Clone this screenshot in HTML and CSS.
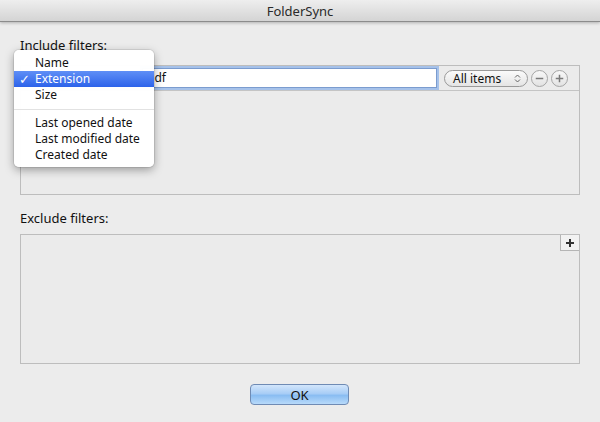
FILE: index.html
```html
<!DOCTYPE html>
<html lang="en">
<head>
    <meta charset="UTF-8">
    <title>FolderSync</title>
    <link rel="stylesheet" href="styles.css">
</head>
<body>
    <div class="window">
        <div class="titlebar">FolderSync</div>
        <div class="content">
            <div class="label">Include filters:</div>
            <div class="filter-box include">
                <div class="filter-row">
                    <div class="field">pdf</div>
                    <div class="popup">
                        <span>All items</span>
                        <svg class="arrows" width="7" height="9" viewBox="0 0 7 9">
                            <path d="M1 3.5 L3.5 1 L6 3.5 M1 5.5 L3.5 8 L6 5.5" fill="none" stroke="#666" stroke-width="1"/>
                        </svg>
                    </div>
                    <div class="round-btn">
                        <svg width="16" height="16" viewBox="0 0 16 16">
                            <path d="M4 8 H12" stroke="#7a7a7a" stroke-width="1.6"/>
                        </svg>
                    </div>
                    <div class="round-btn">
                        <svg width="16" height="16" viewBox="0 0 16 16">
                            <path d="M4 8 H12 M8 4 V12" stroke="#7a7a7a" stroke-width="1.6"/>
                        </svg>
                    </div>
                </div>
            </div>

            <div class="label exclude-label">Exclude filters:</div>
            <div class="filter-box exclude">
                <div class="add-btn">
                    <svg width="10" height="10" viewBox="0 0 10 10">
                        <path d="M1 5 H9 M5 1 V9" stroke="#333" stroke-width="2"/>
                    </svg>
                </div>
            </div>

            <div class="buttons">
                <button class="ok">OK</button>
            </div>
        </div>

        <ul class="menu">
            <li>Name</li>
            <li class="selected"><span class="check">✓</span>Extension</li>
            <li>Size</li>
            <li class="separator"></li>
            <li>Last opened date</li>
            <li>Last modified date</li>
            <li>Created date</li>
        </ul>
    </div>
</body>
</html>
```

FILE: styles.css
```css
body {
    margin: 0;
    padding: 0;
    font-family: "Lucida Grande", "Noto Sans", "DejaVu Sans", sans-serif;
    font-size: 12px;
    color: #111;
}

.window {
    position: relative;
    width: 600px;
    height: 422px;
    background: #ececec;
    overflow: hidden;
}

.titlebar {
    height: 22px;
    line-height: 22px;
    text-align: center;
    font-size: 13px;
    color: #2a2a2a;
    background: linear-gradient(#eeeeee, #d4d4d4);
    border-bottom: 1px solid #8c8c8c;
    box-shadow: 0 1px 3px rgba(0, 0, 0, 0.25);
    box-sizing: border-box;
}

.content {
    padding: 15px 20px 0;
}

.label {
    font-size: 13px;
    height: 16px;
    line-height: 16px;
    margin-bottom: 12px;
}

.filter-box {
    border: 1px solid #bdbdbd;
    background: #ebebeb;
    box-sizing: border-box;
}

.include {
    height: 130px;
}

.filter-row {
    height: 25px;
    border-bottom: 1px solid #c4c4c4;
    display: flex;
    align-items: center;
    box-sizing: border-box;
}

.field {
    margin-left: 121px;
    width: 295px;
    height: 20px;
    line-height: 18px;
    background: #fff;
    border: 1px solid #7b9ccf;
    box-shadow: 0 0 0 2px #a6c2ea;
    padding-left: 4px;
    box-sizing: border-box;
    font-size: 12px;
}

.popup {
    margin-left: 7px;
    width: 84px;
    height: 17px;
    border: 1px solid #9a9a9a;
    border-radius: 9px;
    background: linear-gradient(#fbfbfb, #e4e4e4);
    display: flex;
    align-items: center;
    justify-content: space-between;
    padding: 0 6px 0 8px;
    box-sizing: border-box;
    font-size: 12px;
}

.round-btn {
    width: 17px;
    height: 17px;
    margin-left: 3px;
    border: 1px solid #a5a5a5;
    border-radius: 50%;
    background: linear-gradient(#f8f8f8, #e2e2e2);
    box-sizing: border-box;
    display: flex;
    align-items: center;
    justify-content: center;
}

.round-btn svg {
    width: 15px;
    height: 15px;
}

.exclude-label {
    margin-top: 15px;
    margin-bottom: 8px;
}

.exclude {
    height: 130px;
    display: flex;
    justify-content: flex-end;
    align-items: flex-start;
}

.add-btn {
    width: 19px;
    height: 16px;
    border-left: 1px solid #b5b5b5;
    border-bottom: 1px solid #b5b5b5;
    background: #f2f2f2;
    box-sizing: border-box;
    display: flex;
    align-items: center;
    justify-content: center;
}

.buttons {
    display: flex;
    justify-content: center;
    margin-top: 20px;
}

.ok {
    width: 99px;
    height: 21px;
    border: 1px solid #6f8bb4;
    border-radius: 4px;
    background: linear-gradient(#d3e6fb 0%, #a8cdf6 45%, #8abdf2 55%, #b8dafa 100%);
    font-family: inherit;
    font-size: 13px;
    color: #111;
    padding: 0;
    margin-left: -1px;
}

.menu {
    position: absolute;
    left: 14px;
    top: 50px;
    width: 140px;
    margin: 0;
    padding: 5px 0 4px;
    list-style: none;
    background: rgba(255, 255, 255, 0.98);
    border-radius: 5px;
    box-shadow: 0 3px 10px rgba(0, 0, 0, 0.35), 0 0 0 1px rgba(0, 0, 0, 0.08);
    box-sizing: border-box;
}

.menu li {
    position: relative;
    height: 16px;
    line-height: 16px;
    padding-left: 21px;
    font-size: 12px;
    color: #111;
}

.menu li.selected {
    background: linear-gradient(#5f8ff6, #2d63ea);
    color: #fff;
}

.check {
    position: absolute;
    left: 5px;
    top: 0;
    font-size: 13px;
    font-weight: bold;
}

.menu li.separator {
    height: 1px;
    margin: 6px 0 5px;
    padding: 0;
    background: #e2e2e2;
}
```
